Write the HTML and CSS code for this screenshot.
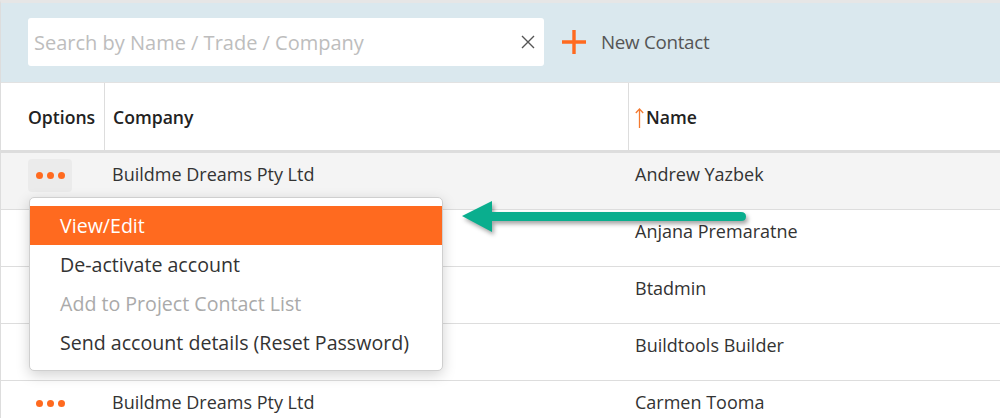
FILE: index.html
```html
<!DOCTYPE html>
<html lang="en">

<head>
    <meta charset="UTF-8">
    <meta name="viewport" content="width=device-width, initial-scale=1.0">
    <title>Contacts</title>
    <link rel="stylesheet" href="styles.css">
</head>

<body>
    <div class="page">
        <div class="toolbar">
            <div class="search">
                <span class="placeholder">Search by Name / Trade / Company</span>
                <svg class="clear" width="14" height="14" viewBox="0 0 14 14">
                    <path d="M1 1L13 13M13 1L1 13" stroke="#555" stroke-width="1.4" fill="none" />
                </svg>
            </div>
            <div class="new-contact">
                <svg width="24" height="24" viewBox="0 0 24 24">
                    <path d="M12 0V24M0 12H24" stroke="#ff6a1f" stroke-width="3.4" fill="none" />
                </svg>
                <span>New Contact</span>
            </div>
        </div>

        <div class="grid">
            <div class="head">
                <div class="cell opt">Options</div>
                <div class="cell sep">Company</div>
                <div class="cell sep name-head">
                    <svg class="sort" width="9" height="20" viewBox="0 0 9 20">
                        <path d="M4.5 1V20M0.8 5L4.5 1L8.2 5" stroke="#f47a30" stroke-width="1.3" fill="none" />
                    </svg>Name
                </div>
            </div>
            <div class="row hover">
                <div class="cell opt"><span class="dots btn"><i></i><i></i><i></i></span></div>
                <div class="cell">Buildme Dreams Pty Ltd</div>
                <div class="cell">Andrew Yazbek</div>
            </div>
            <div class="row">
                <div class="cell opt"></div>
                <div class="cell"></div>
                <div class="cell">Anjana Premaratne</div>
            </div>
            <div class="row">
                <div class="cell opt"></div>
                <div class="cell"></div>
                <div class="cell">Btadmin</div>
            </div>
            <div class="row">
                <div class="cell opt"></div>
                <div class="cell"></div>
                <div class="cell">Buildtools Builder</div>
            </div>
            <div class="row">
                <div class="cell opt"><span class="dots"><i></i><i></i><i></i></span></div>
                <div class="cell">Buildme Dreams Pty Ltd</div>
                <div class="cell">Carmen Tooma</div>
            </div>
        </div>

        <ul class="menu">
            <li class="active">View/Edit</li>
            <li>De-activate account</li>
            <li class="disabled">Add to Project Contact List</li>
            <li>Send account details (Reset Password)</li>
        </ul>

        <svg class="pointer" width="300" height="44" viewBox="0 0 300 44">
            <path d="M4 19L34 4V15H283Q288 15 288 19.5Q288 24 283 24H34V35Z" fill="#0aae8e" />
        </svg>
    </div>
</body>

</html>
```

FILE: styles.css
```css
* {
    margin: 0;
    padding: 0;
    box-sizing: border-box;
}

body {
    font-family: "Open Sans", "Noto Sans", sans-serif;
    color: #333;
    background: #fff;
}

.page {
    position: relative;
    height: 418px;
    overflow: hidden;
    border-top: 3px solid #e6e6e6;
    border-left: 1px solid #ddd;
}

.toolbar {
    height: 79px;
    background: #dae8ee;
    display: flex;
    align-items: center;
    padding-left: 27px;
    padding-bottom: 1px;
}

.search {
    width: 516px;
    height: 48px;
    background: #fff;
    border-radius: 3px;
    display: flex;
    align-items: center;
    justify-content: space-between;
    padding: 0 9px 0 6px;
}

.placeholder {
    color: #bdbdbd;
    font-size: 20px;
}

.new-contact {
    display: flex;
    align-items: center;
    margin-left: 18px;
    gap: 15px;
    color: #555;
    font-size: 18.8px;
    letter-spacing: -0.3px;
}

.grid {
    border-top: 1px solid #e2e2e2;
}

.head,
.row {
    display: grid;
    grid-template-columns: 103px 524px 1fr;
}

.head {
    height: 70px;
    border-bottom: 3px solid #ddd;
    font-weight: 600;
    font-size: 17.6px;
    color: #222;
}

.row {
    height: 57px;
    border-bottom: 1px solid #ddd;
    font-size: 18px;
    line-height: 24px;
}

.row .cell {
    align-items: flex-start;
    padding-top: 9px;
}

.row.hover {
    background: #f4f4f4;
}

.cell {
    display: flex;
    align-items: center;
    padding-left: 8px;
}

.cell.opt {
    padding-left: 27px;
}

.row .cell.opt {
    padding-left: 27px;
    padding-top: 6px;
}

.cell.sep {
    border-left: 1px solid #ddd;
}

.row .cell:nth-child(3) {
    padding-left: 7px;
}

.name-head {
    padding-left: 6px;
}

.sort {
    margin-right: 2px;
    margin-top: 3px;
}

.dots {
    display: flex;
    gap: 4px;
    align-items: center;
    justify-content: center;
    width: 44px;
    height: 33px;
    border-radius: 4px;
}

.dots.btn {
    background: #ebebeb;
}

.dots i {
    width: 7px;
    height: 7px;
    border-radius: 50%;
    background: #ff6a1f;
}

.menu {
    position: absolute;
    left: 28px;
    top: 194px;
    width: 414px;
    list-style: none;
    background: #fff;
    border: 1px solid #cfcfcf;
    border-radius: 5px;
    padding: 8px 0;
    box-shadow: 0 4px 14px rgba(0, 0, 0, 0.18);
    font-size: 19.6px;
}

.menu li {
    height: 39px;
    line-height: 39px;
    padding-left: 30px;
    color: #333;
}

.menu li.active {
    background: #ff6a1f;
    color: #fff;
}

.menu li.disabled {
    color: #aaa;
}

.pointer {
    position: absolute;
    left: 457px;
    top: 194px;
    filter: drop-shadow(2px 3px 2px rgba(0, 0, 0, 0.35));
}
```
